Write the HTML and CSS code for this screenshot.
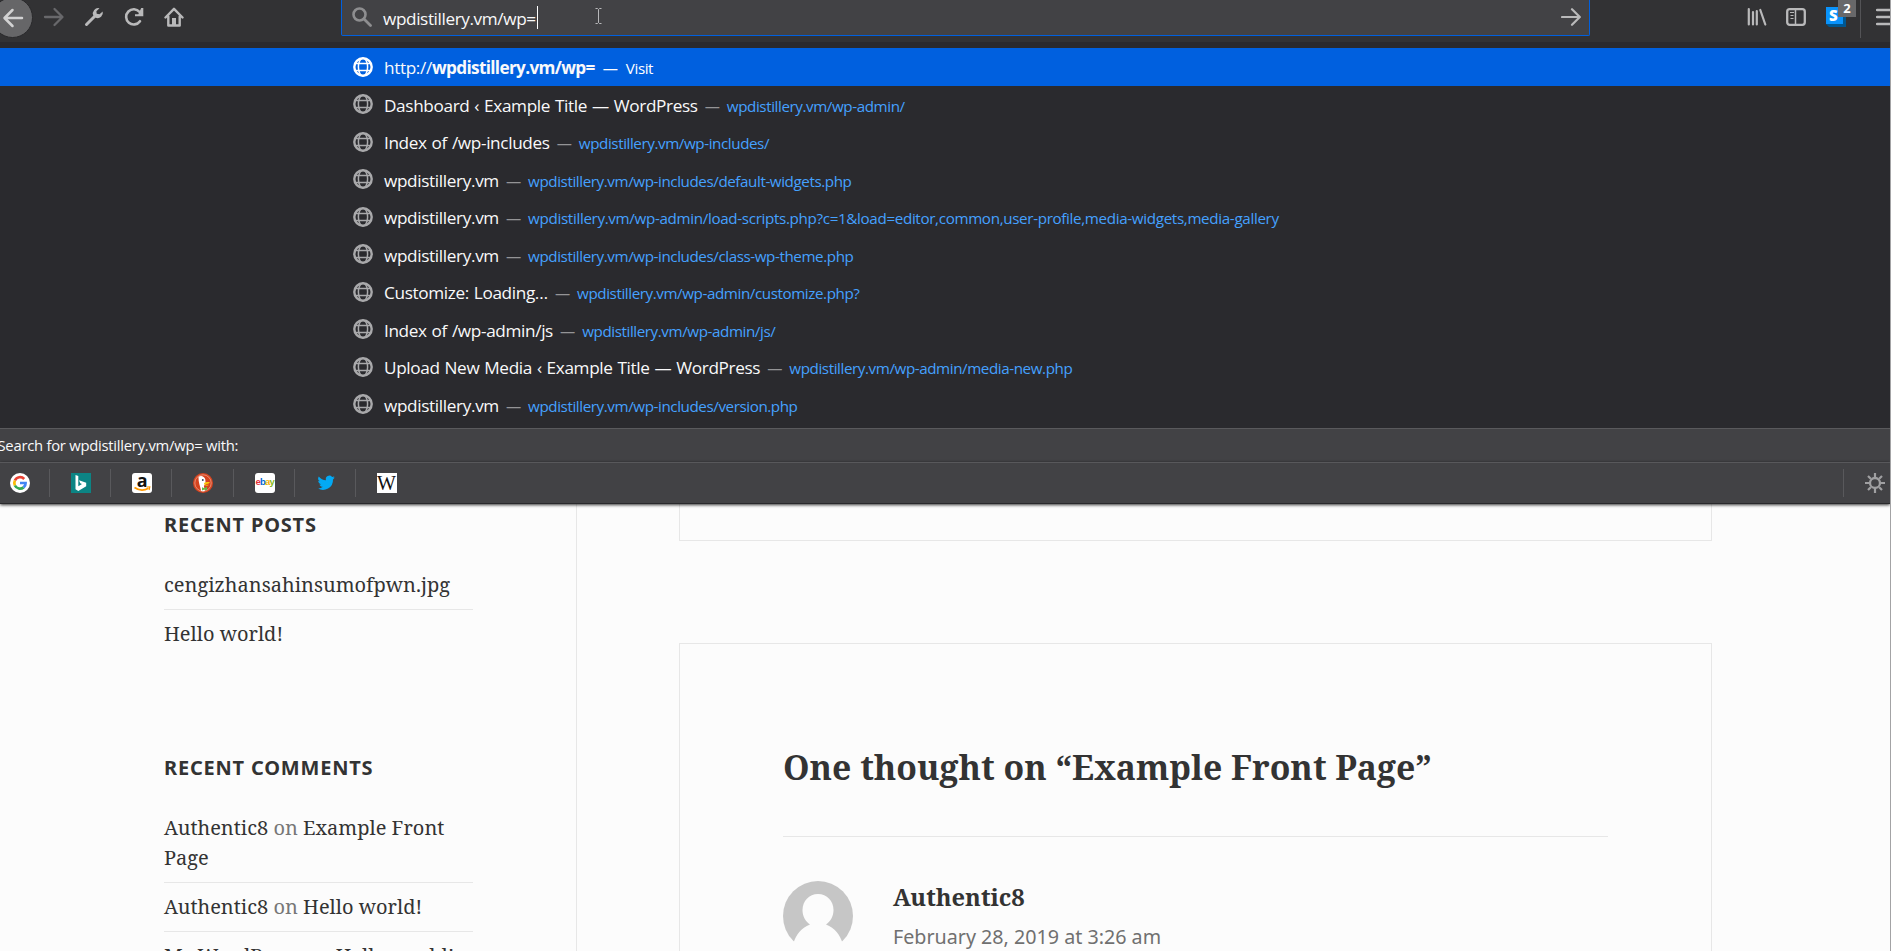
FILE: index.html
```html
<!DOCTYPE html>
<html lang="en">
<head>
<meta charset="utf-8">
<title>Example Front Page</title>
<link rel="stylesheet" href="styles.css">
</head>
<body>
<svg width="0" height="0" class="defs">
  <symbol id="globe" viewBox="0 0 20 20"><g fill="none" stroke="currentColor"><circle cx="10" cy="10" r="8.7" stroke-width="2.4"/><ellipse cx="10" cy="10" rx="4.6" ry="8.8" stroke-width="1.5"/><path d="M3 6.4h14M3 13.6h14" stroke-width="1.5"/></g></symbol>
</svg>
<div class="window">
  <header class="toolbar">
    <div class="nav">
      <span class="back"><svg width="22" height="20" viewBox="0 0 22 20"><path d="M20 10H3M10.500 2L2.500 10l8 8" fill="none" stroke="#d2d2d3" stroke-width="2.500" stroke-linecap="round" stroke-linejoin="round"/></svg></span>
      <svg class="forward" width="22" height="20" viewBox="0 0 22 20"><path d="M2 10h17M11.500 2l8 8-8 8" fill="none" stroke="#68686b" stroke-width="2.300" stroke-linecap="round" stroke-linejoin="round"/></svg>
      <svg class="wrench" width="20" height="20" viewBox="0 0 20 20"><path d="M2.500 17.500L11 9" stroke="#b9b9ba" stroke-width="3" stroke-linecap="round"/><path d="M15.500 1.300a5.300 5.300 0 0 0-6.300 7l2.500 2.500a5.300 5.300 0 0 0 7-6.300L15.500 7.300 12.700 6.800l-.3-2.600z" fill="#b9b9ba"/></svg>
      <svg class="reload" width="20" height="20" viewBox="0 0 20 20"><path d="M16 14.200A7.600 7.600 0 1 1 15.600 5" fill="none" stroke="#b9b9ba" stroke-width="2.600" stroke-linecap="round"/><path d="M19.300 1v8.300H11V7.200h3.300L17.200 1z" fill="#b9b9ba"/></svg>
      <svg class="home" width="20" height="20" viewBox="0 0 20 20"><g fill="none" stroke="#b9b9ba" stroke-width="2.400" stroke-linejoin="round" stroke-linecap="round"><path d="M1.500 10.500L10 1.800l8.500 8.700"/><path d="M4.300 9.500v9h11.400v-9"/></g><path d="M8 11h4v7.500H8z" fill="#b9b9ba"/></svg>
    </div>
    <div class="urlbar">
      <svg class="search" width="20" height="20" viewBox="0 0 20 20"><circle cx="7.500" cy="7.500" r="6" fill="none" stroke="#8e8e90" stroke-width="2.600"/><path d="M12 12l6.500 6.500" stroke="#8e8e90" stroke-width="2.800" stroke-linecap="round"/></svg>
      <span class="typed">wpdistillery.vm/wp=</span><i class="caret"></i>
      <svg class="ibeam" width="7" height="16" viewBox="0 0 7 16"><path d="M.5.5h2l1 1 1-1h2M.5 15.500h2l1-1 1 1h2M3.500 1.500v13" fill="none" stroke="#b8b8ba"/></svg>
      <svg class="go" width="20" height="18" viewBox="0 0 20 18"><path d="M1 9h17.500M11 1.200L18.800 9 11 16.800" fill="none" stroke="#b9b9ba" stroke-width="2.200" stroke-linecap="round" stroke-linejoin="round"/></svg>
    </div>
    <div class="tools">
      <svg class="library" width="20" height="20" viewBox="0 0 20 20"><path d="M1.800 2v15.500M6 5v12.500M9.800 4v13.500M13.300 3l5 14.500" fill="none" stroke="#b9b9ba" stroke-width="2.200" stroke-linecap="round"/></svg>
      <svg class="sidebar-icon" width="20" height="20" viewBox="0 0 20 20"><rect x="1.200" y="2.200" width="17.600" height="15.600" rx="2.500" fill="none" stroke="#b9b9ba" stroke-width="2.300"/><path d="M9.500 3v14" stroke="#b9b9ba" stroke-width="1.500"/><path d="M4 5.500h4M4.500 8.500h3M4.500 11.500h3" stroke="#b9b9ba" stroke-width="1.200"/></svg>
      <span class="addon"><svg width="20" height="20" viewBox="0 0 20 20"><path d="M0 17l3 3h17V3l-3-3v17z" fill="#00568f"/><rect width="17" height="17" fill="#0a93fb"/></svg><b class="letter">S</b><b class="badge">2</b></span>
      <span class="rule"></span>
      <svg class="menu" width="14" height="20" viewBox="0 0 14 20"><path d="M1 3h16M1 10h16M1 17h16" stroke="#b9b9ba" stroke-width="2.400" stroke-linecap="round"/></svg>
    </div>
  </header>

  <ul class="results">
    <li class="row selected"><svg class="globe"><use href="#globe"/></svg><span class="title">http://<b>wpdistillery.vm/wp=</b></span><span class="dash">—</span><span class="url">Visit</span></li>
    <li class="row"><svg class="globe"><use href="#globe"/></svg><span class="title">Dashboard ‹ Example Title — WordPress</span><span class="dash">—</span><span class="url">wpdistillery.vm/wp-admin/</span></li>
    <li class="row"><svg class="globe"><use href="#globe"/></svg><span class="title">Index of /wp-includes</span><span class="dash">—</span><span class="url">wpdistillery.vm/wp-includes/</span></li>
    <li class="row"><svg class="globe"><use href="#globe"/></svg><span class="title">wpdistillery.vm</span><span class="dash">—</span><span class="url">wpdistillery.vm/wp-includes/default-widgets.php</span></li>
    <li class="row"><svg class="globe"><use href="#globe"/></svg><span class="title">wpdistillery.vm</span><span class="dash">—</span><span class="url long">wpdistillery.vm/wp-admin/load-scripts.php?c=1&amp;load=editor,common,user-profile,media-widgets,media-gallery</span></li>
    <li class="row"><svg class="globe"><use href="#globe"/></svg><span class="title">wpdistillery.vm</span><span class="dash">—</span><span class="url">wpdistillery.vm/wp-includes/class-wp-theme.php</span></li>
    <li class="row"><svg class="globe"><use href="#globe"/></svg><span class="title">Customize: Loading…</span><span class="dash">—</span><span class="url">wpdistillery.vm/wp-admin/customize.php?</span></li>
    <li class="row"><svg class="globe"><use href="#globe"/></svg><span class="title">Index of /wp-admin/js</span><span class="dash">—</span><span class="url">wpdistillery.vm/wp-admin/js/</span></li>
    <li class="row"><svg class="globe"><use href="#globe"/></svg><span class="title">Upload New Media ‹ Example Title — WordPress</span><span class="dash">—</span><span class="url">wpdistillery.vm/wp-admin/media-new.php</span></li>
    <li class="row"><svg class="globe"><use href="#globe"/></svg><span class="title">wpdistillery.vm</span><span class="dash">—</span><span class="url">wpdistillery.vm/wp-includes/version.php</span></li>
  </ul>

  <div class="search-with">Search for wpdistillery.vm/wp= with:</div>
  <div class="engines">
    <span class="engine first"><svg width="20" height="20" viewBox="0 0 20 20"><circle cx="10" cy="10" r="10" fill="#fff"/><g fill="none" stroke-width="2.700"><path d="M14.200 6A5.700 5.700 0 0 0 4.900 7.500" stroke="#ea4335"/><path d="M4.900 7.500a5.700 5.700 0 0 0 0 5" stroke="#fbbc05"/><path d="M4.900 12.500a5.700 5.700 0 0 0 8.700 1.900" stroke="#34a853"/><path d="M13.600 14.400A5.500 5.500 0 0 0 15.600 10H10" stroke="#4285f4"/></g></svg></span>
    <span class="engine"><svg width="20" height="20" viewBox="0 0 20 20"><rect width="20" height="20" fill="#0c8484"/><path d="M4.500 2l2.800 1v10.300l3.700-2.200-1.800-.9-1.200-2.900 7.200 2.500v3.500L7.300 18 4.500 16.300z" fill="#fff"/></svg></span>
    <span class="engine amazon"><b>a</b><svg width="20" height="20" viewBox="0 0 20 20"><path d="M2.500 14.500c4.500 3.200 10 3 14 .8" fill="none" stroke="#f90" stroke-width="1.600"/><path d="M14.500 14l3.300-.2-.7 3.200" fill="none" stroke="#f90" stroke-width="1.200"/></svg></span>
    <span class="engine"><svg width="20" height="20" viewBox="0 0 20 20"><circle cx="10" cy="10" r="10" fill="#d5431e"/><circle cx="10" cy="10" r="8.200" fill="none" stroke="#e9957e" stroke-width=".9"/><path d="M5.500 4C7 2 11.500 2.600 12.300 6.500l.3 4-1.700 2.500 1 5c-1.500.5-2.500.4-3.700 0C7.200 13.500 5.300 9 5.500 4z" fill="#fff"/><path d="M11 10c2-1.300 4-1 6-.7-1 1.500-2.700 1.700-5 2.200 1.600.6 2.600.3 4 .2-1.500 1.700-5 1.300-5-1.700z" fill="#fbc70a"/><path d="M9 14.200l2.300 1L14 13.700v3.800l-2.600-1-2.400 1z" fill="#64b845"/><circle cx="9.800" cy="7" r=".9" fill="#2b3b55"/></svg></span>
    <span class="engine ebay"><b><i class="e">e</i><i class="b">b</i><i class="a">a</i><i class="y">y</i></b></span>
    <span class="engine"><svg width="20" height="20" viewBox="0 0 24 24"><path d="M22.500 5.500a8.500 8.500 0 0 1-2.400.7 4.200 4.200 0 0 0 1.900-2.400 8.500 8.500 0 0 1-2.700 1A4.200 4.200 0 0 0 12 8.700 12 12 0 0 1 3.300 4.200a4.200 4.200 0 0 0 1.300 5.700 4.200 4.200 0 0 1-1.900-.5c0 2 1.400 3.800 3.400 4.200a4.200 4.200 0 0 1-1.900.1c.5 1.700 2.100 2.900 4 2.900A8.600 8.600 0 0 1 2 18.400 12 12 0 0 0 20.400 7.700a8.600 8.600 0 0 0 2.100-2.200z" fill="#03a9f4"/></svg></span>
    <span class="engine wiki"><b>W</b></span>
    <span class="settings"><svg width="20" height="20" viewBox="0 0 20 20"><circle cx="10" cy="10" r="5" fill="none" stroke="#a0a0a2" stroke-width="2.300"/><path d="M10 0v4M10 16v4M0 10h4M16 10h4M3 3l2.800 2.800M14.200 14.200L17 17M17 3l-2.800 2.800M5.800 14.200L3 17" stroke="#a0a0a2" stroke-width="2.200"/></svg></span>
  </div>

  <main class="site">
    <aside class="sidebar">
      <section class="widget">
        <h2>RECENT POSTS</h2>
        <ul><li>cengizhansahinsumofpwn.jpg</li><li>Hello world!</li></ul>
      </section>
      <section class="widget">
        <h2>RECENT COMMENTS</h2>
        <ul><li>Authentic8 <em>on</em> Example Front Page</li><li>Authentic8 <em>on</em> Hello world!</li><li>Mr WordPress <em>on</em> Hello world!</li></ul>
      </section>
    </aside>
    <div class="content">
      <article class="card entry"></article>
      <section class="card comments">
        <h2>One thought on “Example Front Page”</h2>
        <div class="comment">
          <svg class="avatar" width="70" height="70" viewBox="0 0 70 70"><circle cx="35" cy="35" r="35" fill="#c6c6c6"/><path d="M35 13c-9 0-15.500 7-15.500 16 0 6 3 11.500 7.500 14.500C18 47 13 54 10.500 62L14 70h42l3.500-8C57 54 52 47 43 43.500c4.500-3 7.500-8.500 7.500-14.500 0-9-6.500-16-15.500-16z" fill="#fcfcfc"/></svg>
          <div class="meta"><b>Authentic8</b><time>February 28, 2019 at 3:26 am</time></div>
        </div>
      </section>
    </div>
  </main>
</div>
</body>
</html>
```
FILE: styles.css
```css
* { box-sizing: border-box; }
body { margin: 0; overflow: hidden; background: #fcfcfc; font-family: "Open Sans", "Noto Sans", sans-serif; }
svg { display: block; flex: none; }
ul { list-style: none; margin: 0; padding: 0; }
.defs { position: absolute; }
.window { width: 1891px; height: 951px; overflow: hidden; display: flex; flex-direction: column; border-right: 1px solid #a3a3a5; }

.toolbar { height: 42px; flex: none; display: flex; background: #323234; overflow: hidden; }
.nav { width: 341px; flex: none; display: flex; align-items: flex-start; padding-top: 7px; }
.back { width: 41px; height: 41px; margin: -10px 0 0 -8px; border-radius: 50%; background: #666668; border: 1px solid #29292b; display: flex; align-items: center; justify-content: center; }
.forward { margin-left: 10px; }
.wrench { margin-left: 19px; }
.reload { margin-left: 20px; }
.home { margin-left: 20px; }
.urlbar { width: 1249px; height: 36px; flex: none; display: flex; align-items: flex-start; padding: 7px 8px 0 10px; background: #424245; border: 1px solid #0060df; border-top: 0; border-radius: 0 0 2px 2px; }
.typed { margin: 0 0 0 11px; font-size: 17.2px; line-height: 24px; letter-spacing: -.4px; color: #f9f9fa; white-space: pre; }
.caret { width: 1px; height: 23px; margin: -1px 0 0 1px; background: #fff; }
.ibeam { margin: 1px 0 0 57px; }
.go { margin: 1px 0 0 auto; }
.tools { flex: 1; display: flex; align-items: flex-start; padding: 7px 0 0 157px; }
.sidebar-icon { margin-left: 19px; }
.addon { position: relative; width: 20px; margin-left: 20px; }
.letter { position: absolute; left: 3px; top: -2px; font: 800 15px/20px "Open Sans", sans-serif; color: #fff; }
.badge { position: absolute; left: 12px; top: -10px; width: 18px; height: 20px; background: #68686a; color: #fff; font-size: 13px; line-height: 22px; text-align: center; }
.rule { width: 1px; height: 38px; margin: -7px 0 0 14px; background: #535356; }
.menu { margin-left: 15px; }

.results { height: 386px; flex: none; padding-top: 6px; background: #2a2a2e; }
.row { height: 37.5px; display: flex; align-items: center; padding-left: 353px; color: #f9f9fa; white-space: pre; }
.row.selected { background: #0060df; }
.globe { width: 20px; height: 20px; color: #a9a9ab; }
.title { margin-left: 11px; font-size: 17.2px; letter-spacing: -.36px; word-spacing: .8px; line-height: 24px; padding-top: 3px; }
.title b { letter-spacing: -.66px; }
.dash { margin: 3px 7px 0; font-size: 15.2px; color: #949496; }
.url { font-size: 15.2px; letter-spacing: -.42px; color: #45a1ff; padding-top: 3px; }
.url.long { letter-spacing: -.34px; }
.selected .title { padding-top: 2px; }
.selected .dash { margin: 3px 8px 0; }
.selected .globe, .selected .dash, .selected .url { color: #fff; }

.search-with { height: 34px; flex: none; text-indent: -2.5px; border-top: 1px solid #5a5a5d; background: #424245; color: #f9f9fa; font-size: 14.8px; letter-spacing: -.25px; line-height: 33px; white-space: pre; }
.engines { height: 42px; flex: none; display: flex; align-items: center; background: #424245; border-top: 1px solid #58585b; border-bottom: 1px solid #29292c; position: relative; box-shadow: 0 1px 3px rgba(0,0,0,.8); }
.engine { position: relative; width: 61.2px; height: 28px; display: flex; align-items: center; justify-content: center; padding-left: 2px; border-right: 1px solid #59595c; }
.engine.first { width: 50px; padding: 0 9px 0 0; }
.engine.wiki { border: 0; padding: 0; }
.amazon b { width: 20px; height: 20px; background: #fff; border-radius: 3px; color: #111; font: 700 18px/14px "Open Sans", sans-serif; text-align: center; }
.amazon svg { position: absolute; left: 21px; top: 4px; }
.ebay b { width: 20px; height: 20px; background: #fff; border-radius: 3px; font: 700 9.5px/18px "Liberation Sans", sans-serif; letter-spacing: -.8px; text-align: center; }
.ebay i { font-style: normal; }
.e { color: #e53238; } .b { color: #0064d2; } .a { color: #f5af02; } .y { color: #86b817; }
.wiki b { width: 20px; height: 20px; background: #fff; color: #111; font: 400 20px/20px "Liberation Serif", serif; display: flex; justify-content: center; }
.settings { margin-left: auto; width: 47px; height: 28px; display: flex; align-items: center; padding-left: 21px; border-left: 1px solid #59595c; }

.site { flex: 1; min-height: 0; display: flex; color: #333; font-family: "Noto Serif", serif; font-size: 20px; line-height: 30px; }
.sidebar { width: 577px; flex: none; padding: 6px 103px 0 164px; border-right: 1px solid #e7e7e7; }
.widget { height: 243px; }
.widget h2 { margin: 0 0 30px; font: 700 20px/30px "Noto Sans", sans-serif; letter-spacing: .04em; }
.widget li { padding-bottom: 9px; white-space: nowrap; }
.widget li + li { border-top: 1px solid #e7e7e7; padding-top: 9px; }
.widget li:first-child { white-space: normal; }
.widget em { font-style: normal; color: #777; }
.content { flex: 1; padding-left: 102px; }
.card { width: 1033px; border: 1px solid #e7e7e7; }
.entry { height: 37px; border-top: 0; }
.comments { margin-top: 102px; height: 400px; padding: 101px 103px 0; }
.comments h2 { margin: 0; height: 92px; font-size: 33.75px; line-height: 44px; border-bottom: 1px solid #e7e7e7; }
.comment { display: flex; gap: 40px; padding-top: 44px; }
.meta b { display: block; font-size: 23.7px; line-height: 32px; }
.meta time { display: block; font: 19.7px/30px "Noto Sans", sans-serif; color: #707070; margin-top: 9px; }
```
